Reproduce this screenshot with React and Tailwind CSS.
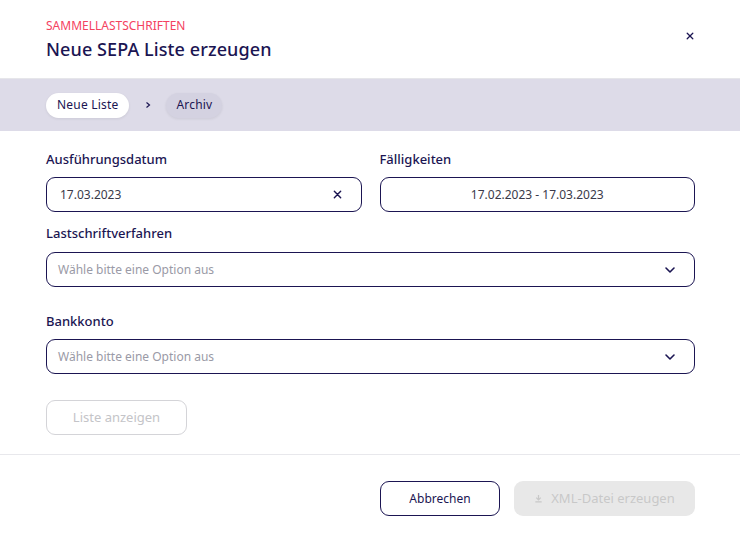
import React from "react";

const navy = "text-[#1b1552]";

function Chevron() {
  return (
    <svg width="12" height="12" viewBox="0 0 12 12" fill="none">
      <path d="M2 4 L6 8 L10 4" stroke="#1b1552" strokeWidth="1.6" strokeLinecap="round" strokeLinejoin="round" />
    </svg>
  );
}

function XIcon({ size = 9 }) {
  return (
    <svg width={size} height={size} viewBox="0 0 10 10" fill="none">
      <path d="M1.5 1.5 L8.5 8.5 M8.5 1.5 L1.5 8.5" stroke="#1b1552" strokeWidth="1.6" strokeLinecap="round" />
    </svg>
  );
}

export default function App() {
  return (
    <div className="w-[740px] h-[539px] bg-white font-['Noto_Sans',sans-serif] overflow-hidden">
      <div className="h-[79px] flex items-start justify-between border-b border-[#e6e6ea] pl-[46px] pr-[46px]">
        <div className="pt-[18px]">
          <div className="text-[12px] leading-[16px] text-[#f4425f]">SAMMELLASTSCHRIFTEN</div>
          <div className={`text-[18px] leading-[24px] mt-[3px] font-medium tracking-[0.1px] ${navy}`}>Neue SEPA Liste erzeugen</div>
        </div>
        <div className="pt-[32px]">
          <XIcon size={8} />
        </div>
      </div>
      <div className="h-[52px] bg-[#dddbe8] flex items-center pl-[46px]">
        <div className="h-[25px] px-[11px] rounded-full bg-white flex items-center text-[12px] tracking-[0.2px] text-[#1b1552] shadow-[0_1px_3px_rgba(0,0,0,0.08)]">Neue Liste</div>
        <div className="ml-[15px] mr-[14px] text-[#1b1552]">
          <svg width="8" height="8" viewBox="0 0 8 8" fill="none"><path d="M2.5 1.5 L5.5 4 L2.5 6.5" stroke="#1b1552" strokeWidth="1.2" /></svg>
        </div>
        <div className="h-[25px] px-[10px] rounded-full bg-[#d4d2e1] flex items-center text-[12px] tracking-[0.2px] text-[#1b1552] shadow-[0_1px_3px_rgba(0,0,0,0.08)]">Archiv</div>
      </div>

      <div className="pl-[46px] pr-[45px] pt-[19px]">
        <div className="grid grid-cols-2 gap-[18px]">
          <div>
            <div className={`text-[13px] leading-[18px] font-medium ${navy}`}>Ausführungsdatum</div>
            <div className="mt-[9px] h-[35px] rounded-[9px] border-[1.5px] border-[#1b1552] flex items-center justify-between pl-[13px] pr-[19px]">
              <span className="text-[12px] text-[#3a3a4a]">17.03.2023</span>
              <XIcon size={9} />
            </div>
          </div>
          <div>
            <div className={`text-[13px] leading-[18px] font-medium ${navy}`}>Fälligkeiten</div>
            <div className="mt-[9px] h-[35px] rounded-[9px] border-[1.5px] border-[#1b1552] flex items-center justify-center">
              <span className="text-[12px] text-[#3a3a4a]">17.02.2023 - 17.03.2023</span>
            </div>
          </div>
        </div>

        <div className={`mt-[12px] text-[13px] leading-[18px] font-medium ${navy}`}>Lastschriftverfahren</div>
        <div className="mt-[10px] h-[35px] rounded-[9px] border-[1.5px] border-[#1b1552] flex items-center justify-between pl-[11px] pr-[18px]">
          <span className="text-[12px] text-[#9a9aa6]">Wähle bitte eine Option aus</span>
          <Chevron />
        </div>

        <div className={`mt-[25px] text-[13px] leading-[18px] font-medium ${navy}`}>Bankkonto</div>
        <div className="mt-[9px] h-[35px] rounded-[9px] border-[1.5px] border-[#1b1552] flex items-center justify-between pl-[11px] pr-[18px]">
          <span className="text-[12px] text-[#9a9aa6]">Wähle bitte eine Option aus</span>
          <Chevron />
        </div>

        <div className="mt-[26px] w-[141px] h-[35px] rounded-[9px] border border-[#d4d4d8] flex items-center justify-center text-[13px] text-[#c4c4c8]">
          Liste anzeigen
        </div>
      </div>

      <div className="mt-[19px] border-t border-[#e8e8ec]" />

      <div className="flex justify-end gap-[14px] pr-[45px] pt-[26px]">
        <div className="w-[120px] h-[35px] rounded-[9px] border-[1.5px] border-[#1b1552] flex items-center justify-center text-[12px] text-[#1b1552]">
          Abbrechen
        </div>
        <div className="w-[181px] h-[35px] rounded-[9px] bg-[#e8e8e8] flex items-center justify-center gap-[8px] text-[13px] text-[#c8c8c8]">
          <svg width="9" height="9" viewBox="0 0 10 10" fill="none">
            <path d="M5 1 V6 M2.5 4 L5 6.5 L7.5 4 M1.5 8.8 H8.5" stroke="#c8c8c8" strokeWidth="1.4" />
          </svg>
          <span>XML-Datei erzeugen</span>
        </div>
      </div>
    </div>
  );
}
